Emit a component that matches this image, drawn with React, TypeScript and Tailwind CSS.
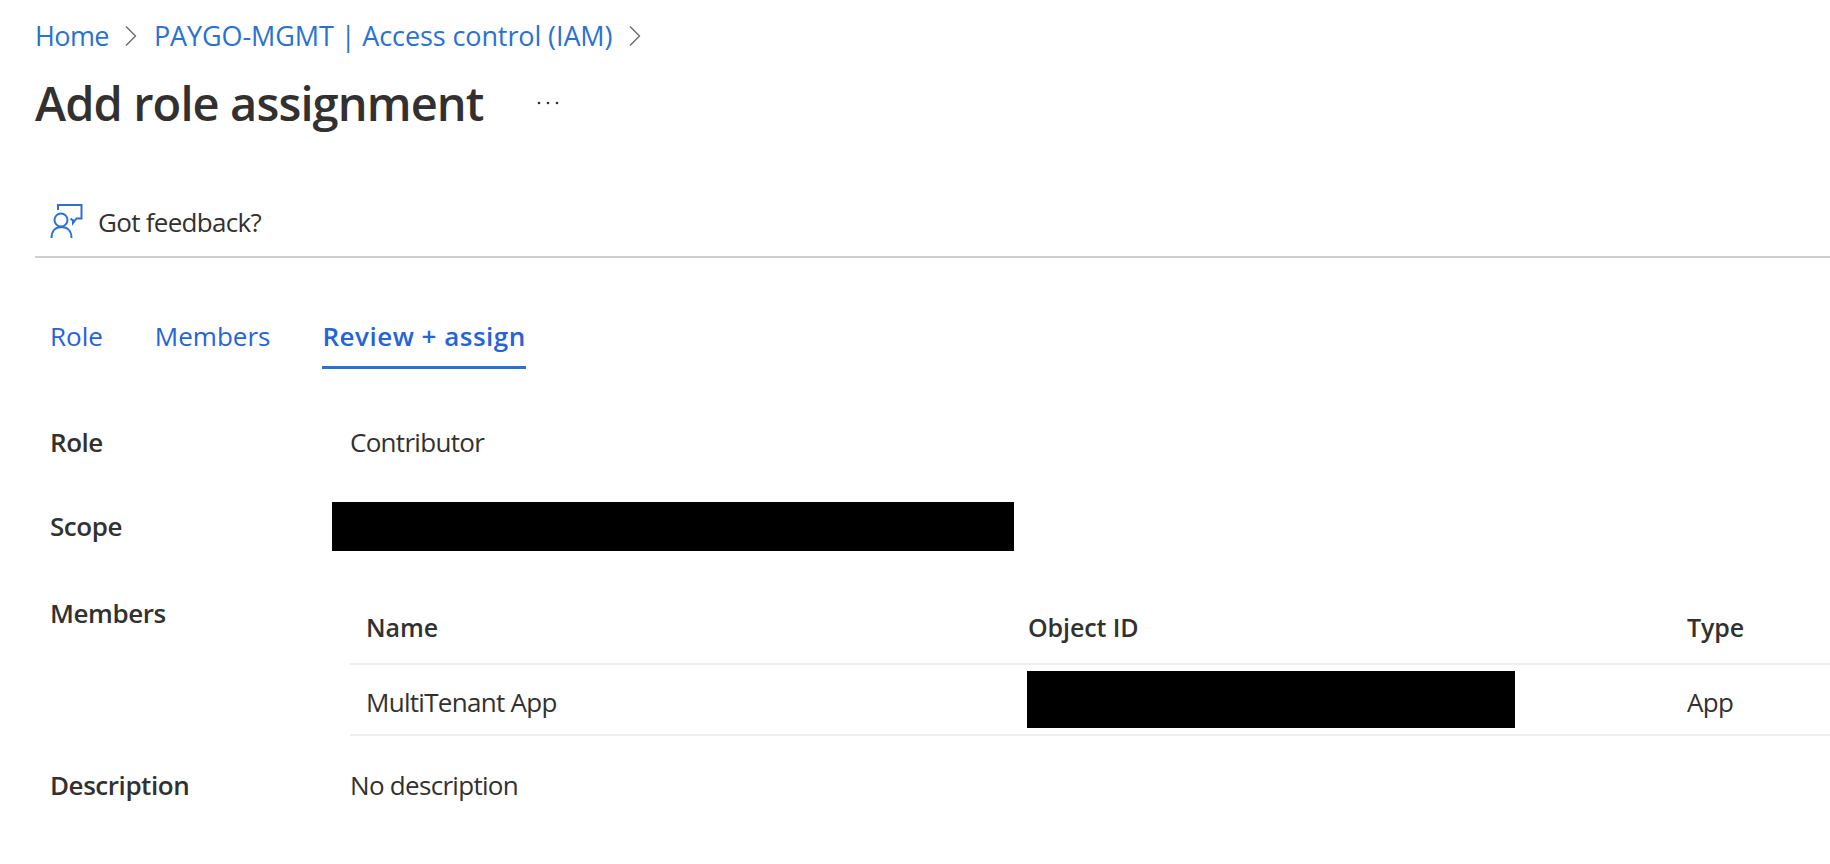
const inkText = "text-[#323130]";

function Chevron() {
  return (
    <svg width="12" height="20" viewBox="0 0 12 20" fill="none" className="shrink-0">
      <path d="M1 0.5 L10.5 10 L1 19.5" stroke="#666666" strokeWidth="1.3" />
    </svg>
  );
}

function FeedbackIcon() {
  return (
    <svg width="34" height="36" viewBox="0 0 34 36" fill="none" stroke="#2b72d0" strokeWidth="2">
      <path d="M8 6 V1 H31.5 V14.5 H26.5 L23 19 V15.5" />
      <path d="M20.5 14.5 L24 17.5" />
      <circle cx="11" cy="16" r="6.5" />
      <path d="M1.5 34 C1.5 27 5.5 23 11.5 23 C17.5 23 21.5 27 21.5 34" />
    </svg>
  );
}

function Field({ label, children, className }: { label: string; children?: React.ReactNode; className: string }) {
  return (
    <div className={`flex items-center ${className}`}>
      <div className={`w-[300px] shrink-0 font-semibold tracking-[-0.45px] ${inkText}`}>{label}</div>
      {children}
    </div>
  );
}

export default function App() {
  return (
    <div className="h-[864px] overflow-hidden bg-white pl-[35px] text-[26px] font-['Open_Sans',sans-serif] tracking-[-0.7px]">
      <nav className="flex h-[72px] items-center text-[27px] tracking-[-0.1px] text-[#2b72d0]">
        <span className="tracking-[-0.6px]">Home</span>
        <span className="ml-[16px] mr-[17px]"><Chevron /></span>
        <span>PAYGO-MGMT | Access control (IAM)</span>
        <span className="ml-[17px]"><Chevron /></span>
      </nav>

      <div className="flex h-[62px] items-center">
        <h1 className={`text-[47px] font-semibold tracking-[-0.9px] ${inkText}`}>Add role assignment</h1>
        <svg width="22" height="4" viewBox="0 0 22 4" className="ml-[54px]" fill="#323130">
          <circle cx="2" cy="2" r="1.3" />
          <circle cx="11" cy="2" r="1.3" />
          <circle cx="20" cy="2" r="1.3" />
        </svg>
      </div>

      <div className="mt-[54px] flex h-[70px] items-center border-b-2 border-[#cfcfcf] pl-[15px]">
        <FeedbackIcon />
        <span className={`ml-[14px] ${inkText}`}>Got feedback?</span>
      </div>

      <div className="pl-[15px]">
        <div className="mt-[48px] flex gap-[52px] text-[#2563d9] tracking-normal">
          <button className="flex h-[63px] items-center border-b-[3px] border-transparent">Role</button>
          <button className="flex h-[63px] items-center border-b-[3px] border-transparent">Members</button>
          <button className="flex h-[63px] items-center border-b-[3px] border-[#2b72d0] font-semibold tracking-[0.5px]">Review + assign</button>
        </div>

        <Field label="Role" className="mt-[48px] h-[50px]">
          <span className={inkText}>Contributor</span>
        </Field>

        <Field label="Scope" className="mt-[35px] h-[49px]">
          <div className="-ml-[18px] h-[49px] w-[682px] bg-black" />
        </Field>

        <div className="mt-[41px] flex">
          <div className={`flex h-[42px] w-[300px] shrink-0 items-center font-semibold tracking-[-0.45px] ${inkText}`}>Members</div>
          <div className="flex-1">
            <div className={`grid h-[73px] grid-cols-[662px_659px_1fr] items-center border-b-2 border-[#eeeeee] text-[25px] font-semibold tracking-[-0.1px] ${inkText}`}>
              <span className="pl-4 pt-[1px]">Name</span>
              <span className="pl-4 pt-[1px]">Object ID</span>
              <span className="pl-4 pt-[1px]">Type</span>
            </div>
            <div className={`grid h-[71px] grid-cols-[662px_659px_1fr] items-center border-b-2 border-[#eeeeee] ${inkText}`}>
              <span className="pl-4 pt-[5px]">MultiTenant App</span>
              <div className="pl-[15px]">
                <div className="h-[57px] w-[488px] bg-black" />
              </div>
              <span className="pl-4 pt-[5px]">App</span>
            </div>
          </div>
        </div>

        <Field label="Description" className="mt-[24px] h-[50px]">
          <span className={inkText}>No description</span>
        </Field>
      </div>
    </div>
  );
}
